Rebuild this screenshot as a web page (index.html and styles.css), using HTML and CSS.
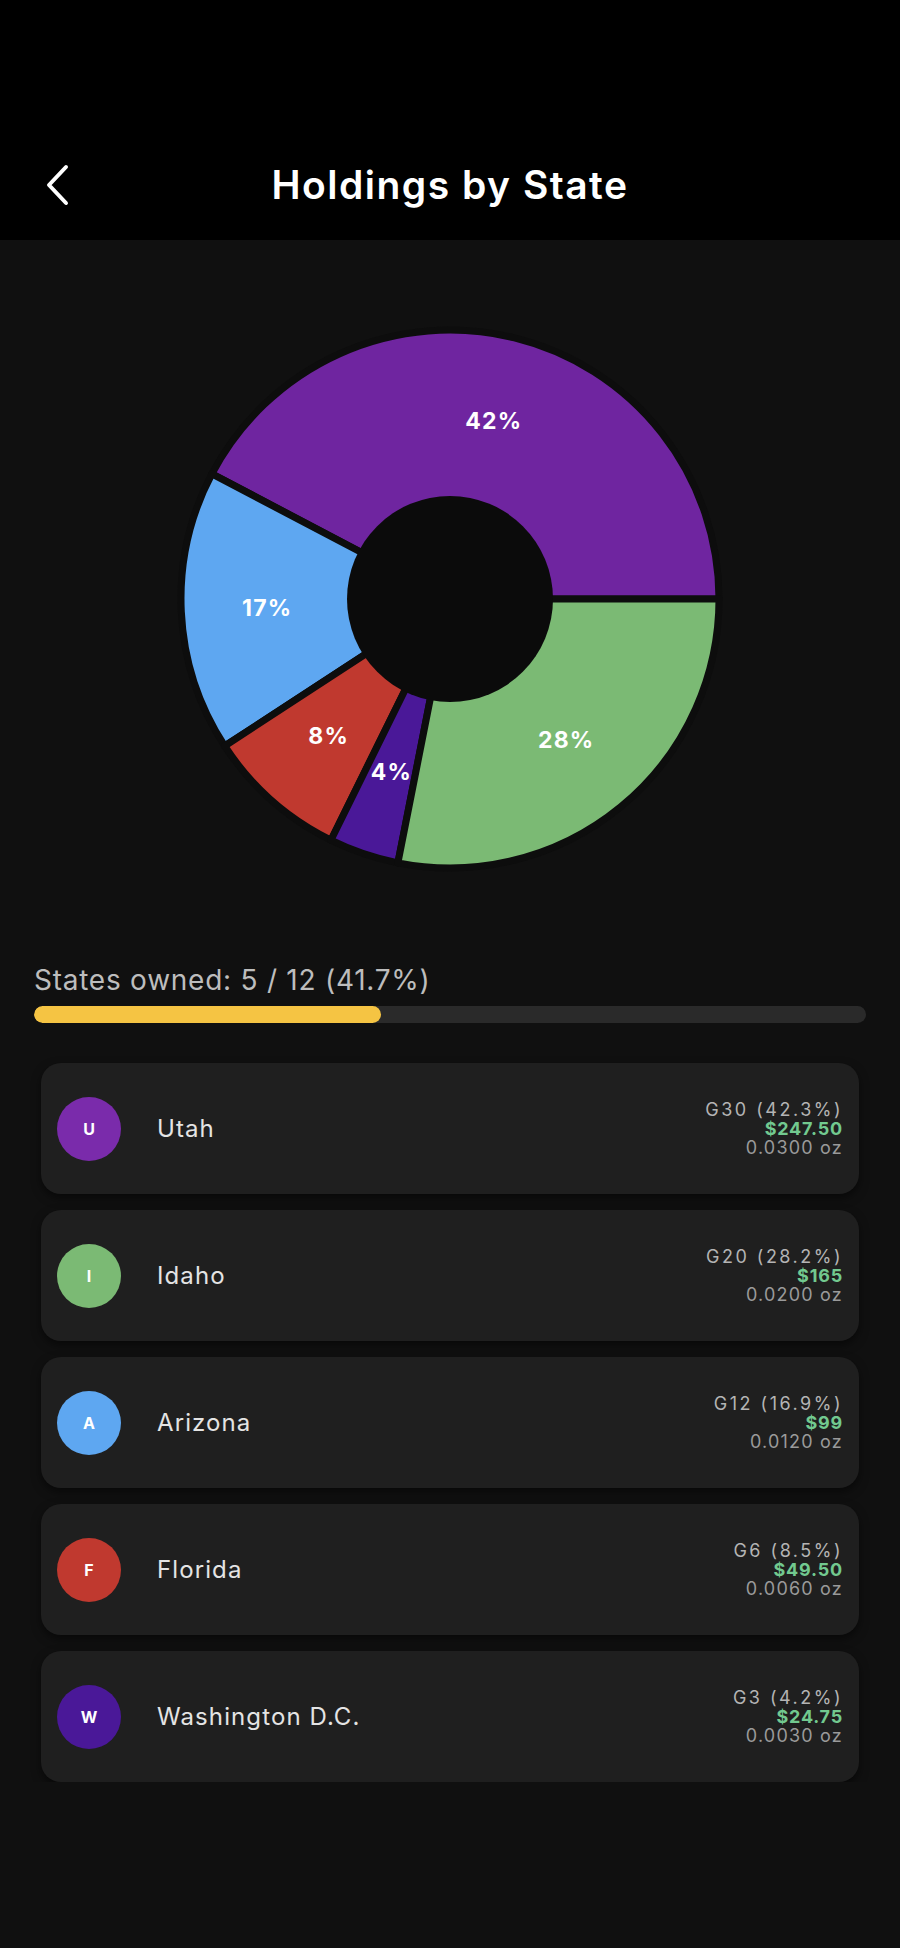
FILE: index.html
```html
<!DOCTYPE html>
<html lang="en">
<head>
    <meta charset="UTF-8">
    <meta name="viewport" content="width=device-width, initial-scale=1.0">
    <title>Holdings by State</title>
    <link rel="stylesheet" href="styles.css">
</head>
<body>
    <header class="topbar">
        <div class="nav">
            <a href="#" class="back">
                <svg width="28" height="44" viewBox="0 0 28 44">
                    <polyline points="20,5 3,23 20,41" fill="none" stroke="#fff" stroke-width="4" stroke-linecap="round" stroke-linejoin="round"/>
                </svg>
            </a>
            <h1>Holdings by State</h1>
        </div>
    </header>

    <main class="content">
        <div class="chart">
            <!-- donut: slices run counter-clockwise from 3 o'clock -->
            <svg width="546" height="546" viewBox="-273 -273 546 546">
                <g stroke="#0d0d0d" stroke-width="7" stroke-linejoin="round">
                    <path d="M0,0 L269,0 A269,269 0 0 0 -238.1,-125.1 Z" fill="#6f25a0"/>
                    <path d="M0,0 L-238.1,-125.1 A269,269 0 0 0 -225.3,147.0 Z" fill="#5ea7f1"/>
                    <path d="M0,0 L-225.3,147.0 A269,269 0 0 0 -119.1,241.2 Z" fill="#c0392f"/>
                    <path d="M0,0 L-119.1,241.2 A269,269 0 0 0 -52.1,263.9 Z" fill="#4a1898"/>
                    <path d="M0,0 L-52.1,263.9 A269,269 0 0 0 269,0 Z" fill="#7bba74"/>
                </g>
                <circle cx="0" cy="0" r="103" fill="#0b0b0b"/>
                <g class="pct">
                    <text x="43.8" y="-177.7">42%</text>
                    <text x="-182.8" y="8.6">17%</text>
                    <text x="-121.4" y="136.9">8%</text>
                    <text x="-58.7" y="173.3">4%</text>
                    <text x="116.2" y="141.4">28%</text>
                </g>
            </svg>
        </div>

        <div class="owned">
            <div class="owned-label">States owned: 5 / 12 (41.7%)</div>
            <div class="bar"><div class="bar-fill" style="width: 41.7%"></div></div>
        </div>

        <div class="list">
            <div class="card">
                <div class="avatar c-utah">U</div>
                <div class="name">Utah</div>
                <div class="stats">
                    <div class="grams">G30 (42.3%)</div>
                    <div class="value">$247.50</div>
                    <div class="oz">0.0300 oz</div>
                </div>
            </div>
            <div class="card">
                <div class="avatar c-idaho">I</div>
                <div class="name">Idaho</div>
                <div class="stats">
                    <div class="grams">G20 (28.2%)</div>
                    <div class="value">$165</div>
                    <div class="oz">0.0200 oz</div>
                </div>
            </div>
            <div class="card">
                <div class="avatar c-arizona">A</div>
                <div class="name">Arizona</div>
                <div class="stats">
                    <div class="grams">G12 (16.9%)</div>
                    <div class="value">$99</div>
                    <div class="oz">0.0120 oz</div>
                </div>
            </div>
            <div class="card">
                <div class="avatar c-florida">F</div>
                <div class="name">Florida</div>
                <div class="stats">
                    <div class="grams">G6 (8.5%)</div>
                    <div class="value">$49.50</div>
                    <div class="oz">0.0060 oz</div>
                </div>
            </div>
            <div class="card">
                <div class="avatar c-dc">W</div>
                <div class="name">Washington D.C.</div>
                <div class="stats">
                    <div class="grams">G3 (4.2%)</div>
                    <div class="value">$24.75</div>
                    <div class="oz">0.0030 oz</div>
                </div>
            </div>
        </div>
    </main>
</body>
</html>
```

FILE: styles.css
```css
body {
    margin: 0;
    background-color: #101010;
    color: #fff;
    font-family: Inter, "Noto Sans", sans-serif;
}

.topbar {
    background-color: #000;
    height: 240px;
    box-sizing: border-box;
    padding-top: 148px;
}
.nav {
    position: relative;
    height: 72px;
    display: flex;
    align-items: center;
    justify-content: center;
}
.back {
    position: absolute;
    left: 46px;
    top: 14px;
    display: block;
    line-height: 0;
}
.nav h1 {
    margin: 0;
    font-size: 39px;
    font-weight: 600;
    letter-spacing: 1.5px;
}

.content {
    padding: 86px 34px 0;
}
.chart {
    display: flex;
    justify-content: center;
}
.chart svg {
    display: block;
}
.pct text {
    fill: #fff;
    font-family: Inter, sans-serif;
    font-size: 23px;
    font-weight: 700;
    letter-spacing: 1.2px;
    text-anchor: middle;
    dominant-baseline: central;
}

.owned {
    margin-top: 91px;
}
.owned-label {
    font-size: 28px;
    line-height: 34px;
    color: #bdbdbd;
    letter-spacing: 0.75px;
}
.bar {
    margin-top: 9px;
    height: 17px;
    border-radius: 9px;
    background-color: #2a2a2a;
    overflow: hidden;
}
.bar-fill {
    height: 100%;
    background-color: #f5c443;
    border-radius: 9px;
}

.list {
    margin-top: 40px;
    padding: 0 7px;
    display: flex;
    flex-direction: column;
    gap: 16px;
}
.card {
    height: 131px;
    box-sizing: border-box;
    padding: 0 16px;
    display: flex;
    align-items: center;
    background-color: #1f1f1f;
    border-radius: 20px;
    box-shadow: 0 4px 10px rgba(0, 0, 0, 0.5);
}
.avatar {
    width: 64px;
    height: 64px;
    border-radius: 50%;
    display: flex;
    align-items: center;
    justify-content: center;
    font-size: 16px;
    font-weight: 700;
    color: #fff;
    flex-shrink: 0;
}
.c-utah { background-color: #7a2bab; }
.c-idaho { background-color: #7bba74; }
.c-arizona { background-color: #5ea7f1; }
.c-florida { background-color: #c0392f; }
.c-dc { background-color: #4a1898; }

.name {
    margin-left: 36px;
    flex: 1;
    font-size: 24px;
    color: #e4e4e4;
    letter-spacing: 1.1px;
}
.stats {
    text-align: right;
    font-size: 18px;
    line-height: 19px;
    letter-spacing: 1.2px;
}
.grams {
    color: #b4b4b4;
    letter-spacing: 2.5px;
}
.value {
    color: #72c98f;
    font-weight: 700;
    letter-spacing: 0.8px;
}
.oz {
    color: #9a9a9a;
}
```
